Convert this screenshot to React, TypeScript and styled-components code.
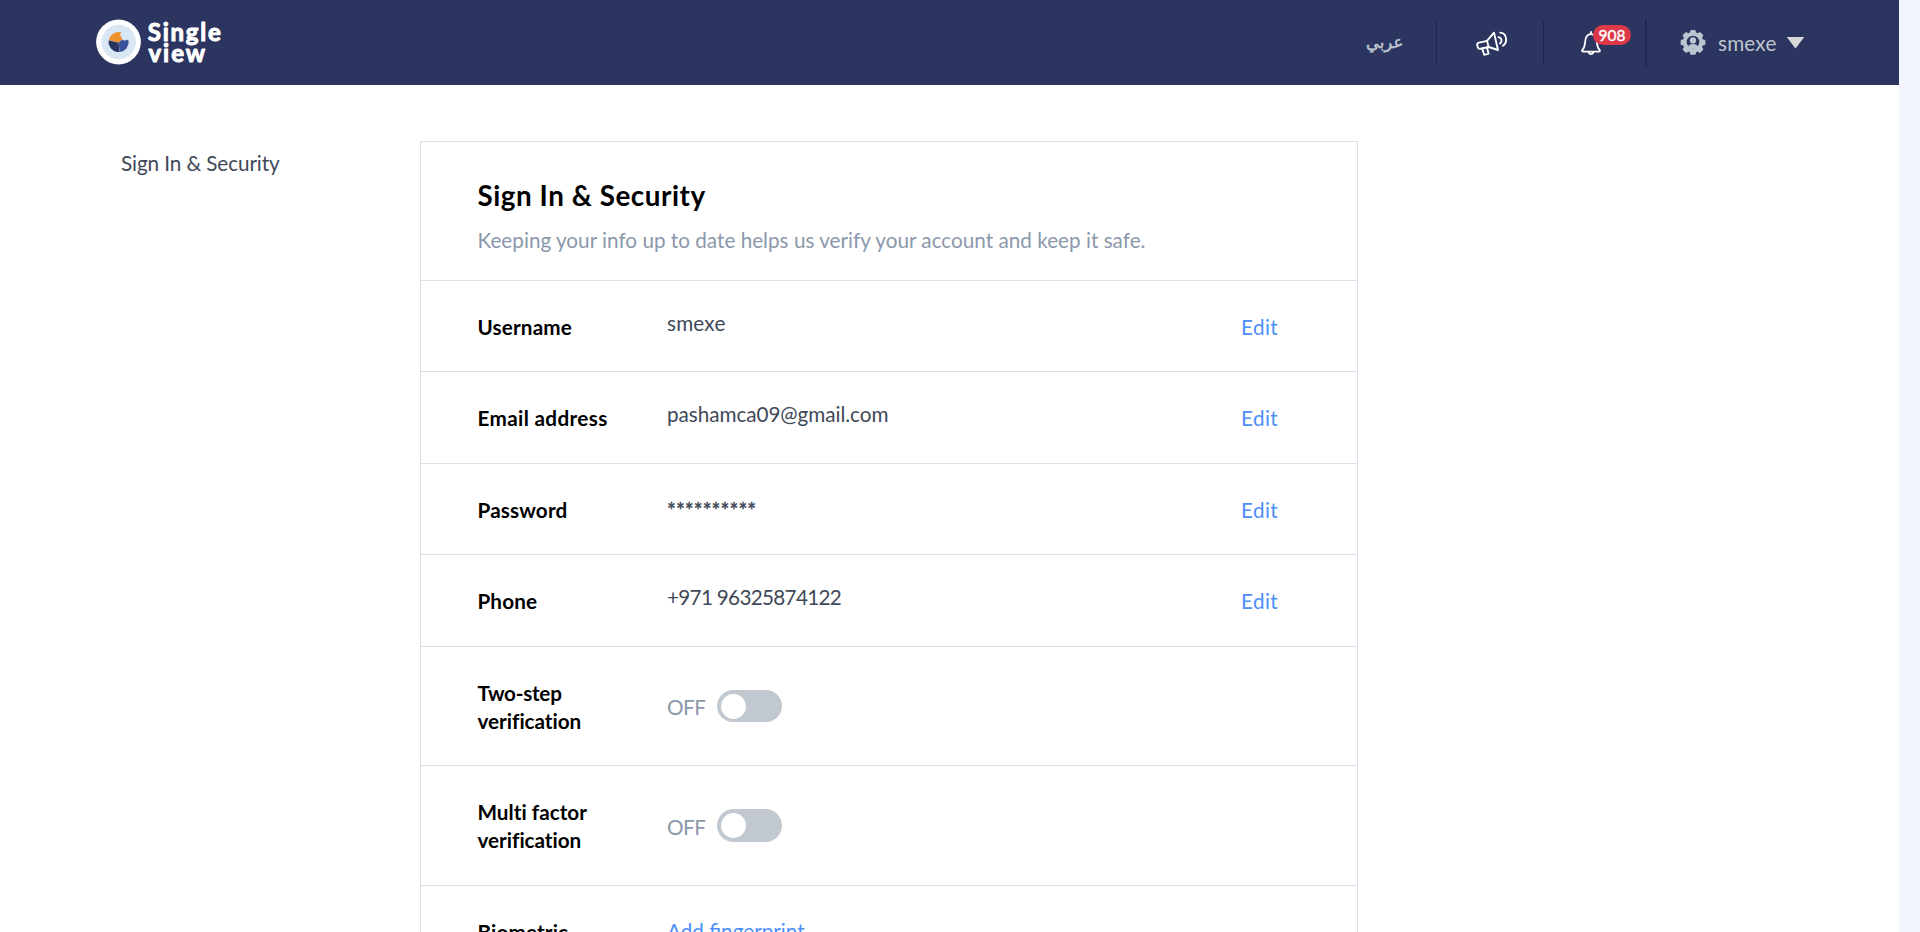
import React from "react";
import styled, { createGlobalStyle } from "styled-components";

const GlobalStyle = createGlobalStyle`
  * { box-sizing: border-box; }
  body {
    margin: 0;
    background: #f2f5fe;
    font-family: Lato, "Liberation Sans", sans-serif;
    font-size: 20.7px;
    line-height: 28px;
    overflow: hidden;
  }
`;

const Page = styled.div`
  width: 1899px;
  height: 932px;
  overflow: hidden;
  background: #fff;
`;

const Header = styled.header`
  display: flex;
  justify-content: space-between;
  height: 85px;
  padding: 0 95px 0 96px;
  background: #2b355f;
`;

const Logo = styled.svg`
  display: block;
  margin-top: 15px;
`;

const Nav = styled.nav`
  display: flex;
  align-items: center;
`;

const NavCell = styled.div<{ $width: number; $line?: number }>`
  display: flex;
  align-items: center;
  width: ${(p) => p.$width}px;
  height: 46px;
  border-right: ${(p) => p.$line ?? 1}px solid #1f2750;
`;

const Language = styled.span`
  margin: 1px 0 0 19px;
  font-family: "DejaVu Sans", sans-serif;
  font-size: 16.5px;
  -webkit-text-stroke: 0.5px #bdc6d0;
  color: #bdc6d0;
`;

const NavIcon = styled.svg<{ $left: number }>`
  display: block;
  flex: none;
  margin-left: ${(p) => p.$left}px;
`;

const BellBox = styled.div`
  position: relative;
  margin: 2px 0 0 37px;
`;

const Badge = styled.span`
  position: absolute;
  left: 12px;
  top: -6px;
  width: 38px;
  height: 20px;
  border-radius: 10px;
  background: #dc3848;
  color: #fff;
  font-size: 15.5px;
  -webkit-text-stroke: 0.4px #fff;
  line-height: 21px;
  text-align: center;
`;

const UserMenu = styled.div`
  display: flex;
  align-items: center;
  width: 157px;
`;

const UserName = styled.span`
  margin: 1px 0 0 12px;
  letter-spacing: 0.2px;
  color: #bdc6d0;
`;

const Main = styled.main`
  display: flex;
  align-items: flex-start;
  padding: 56px 0 0 120px;
`;

const SideNav = styled.aside`
  width: 300px;
  padding: 8px 0 0 1px;
  letter-spacing: -0.09px;
  color: #3f4858;
`;

const Card = styled.section`
  width: 938px;
  border: 1px solid #dae0e9;
  border-bottom: 0;
`;

const CardHead = styled.div`
  height: 139px;
  padding: 37px 0 0 56.5px;
  border-bottom: 1px solid #dae0e9;
`;

const Title = styled.h1`
  margin: 0;
  font-size: 27.8px;
  line-height: 34px;
  letter-spacing: 0.55px;
  color: #000;
`;

const Subtitle = styled.p`
  margin: 13px 0 0;
  letter-spacing: 0.01px;
  color: #8b98ab;
`;

const Row = styled.div<{ $height: number }>`
  display: flex;
  align-items: center;
  height: ${(p) => p.$height}px;
  padding-left: 56px;
  border-bottom: 1px solid #dae0e9;
`;

const Label = styled.div<{ $top?: number }>`
  width: 190px;
  padding: ${(p) => p.$top ?? 0}px 0 0 0.5px;
  font-weight: 700;
  color: #000;
`;

const Line = styled.span<{ $spacing: number }>`
  display: block;
  letter-spacing: ${(p) => p.$spacing}px;
`;

const Value = styled.div<{ $spacing: number; $masked?: boolean }>`
  width: 574px;
  padding-top: ${(p) => (p.$masked ? 9 : 0)}px;
  padding-bottom: 7px;
  -webkit-text-stroke: ${(p) => (p.$masked ? "0.5px #3f4858" : "0")};
  letter-spacing: ${(p) => p.$spacing}px;
  color: #3f4858;
`;

const Link = styled.a<{ $spacing: number; $top?: number; $raise?: number }>`
  padding-top: ${(p) => p.$top ?? 0}px;
  padding-bottom: ${(p) => p.$raise ?? 0}px;
  letter-spacing: ${(p) => p.$spacing}px;
  color: #4d8ef8;
`;

const ToggleState = styled.span`
  width: 50px;
  padding-top: 2px;
  letter-spacing: -0.5px;
  color: #8b98ab;
`;

const Toggle = styled.span<{ $tall?: boolean }>`
  display: flex;
  align-items: center;
  width: 65px;
  height: ${(p) => (p.$tall ? 33 : 32)}px;
  padding-left: 4px;
  border-radius: 17px;
  background: #c2c8d0;
`;

const Knob = styled.span`
  width: 25px;
  height: 25px;
  border-radius: 50%;
  background: #fff;
`;

const details = [
  { label: "Username", labelSpacing: 0.15, value: "smexe", spacing: 0.2, height: 91, top: 2 },
  { label: "Email address", labelSpacing: 0.35, value: "pashamca09@gmail.com", spacing: -0.05, height: 92 },
  { label: "Password", labelSpacing: 0.15, value: "**********", spacing: 0.13, height: 91, top: 2, masked: true },
  { label: "Phone", labelSpacing: 0.1, value: "+971 96325874122", spacing: -0.7, height: 92 },
];

const toggles = [
  { first: "Two-step", spacing: -0.25, height: 119, top: 2 },
  { first: "Multi factor", spacing: 0.02, height: 120, tall: true },
];

const BrandLogo = () => (
  <Logo width="128" height="55" viewBox="96 15 128 55">
    <circle cx="118.5" cy="42" r="22.4" fill="#fff" />
    <circle cx="118.7" cy="42" r="17.3" fill="#d9e6f4" />
    <path d="M118.5 42.8 108.9 40A10 10 0 0 1 118.7 32h2.8a3.2 3.2 0 0 0 .4 5.4l.2 2z" fill="#ee9230" />
    <path d="M118.5 42.8 108.8 40.2A10 10 0 0 0 119.6 52z" fill="#2b3562" />
    <path d="M118.5 42.8 119.8 52A10 10 0 0 0 128.6 40.6c-.8-.9-1.7-.9-2.5-.4-1.4.6-2.6.5-3.8-.6z" fill="#3a539b" />
    <g
      fill="#fff"
      stroke="#fff"
      strokeWidth="1"
      strokeLinejoin="round"
      fontFamily="Lato, sans-serif"
      fontSize="24"
      fontWeight="700"
    >
      <text x="147.8" y="40.6" textLength="73">Single</text>
      <text x="148.5" y="61.6" textLength="56.5">view</text>
    </g>
  </Logo>
);

const Megaphone = () => (
  <NavIcon $left={39} width="32" height="26" viewBox="0 -0.6 32 26" fill="none" stroke="#fff" strokeWidth="1.9" strokeLinejoin="round" strokeLinecap="round">
    <path d="M11 10.2 3 12.1C1.4 12.5.9 13.5 1.3 15l.5 1.7c.4 1.3 1.3 1.8 2.6 1.5l8.2-1.8 9.4 3L18 2z" />
    <path d="m11 10.2 1.6 6.2M6.2 18l2 6.2 4.4-1.1-1.6-6M22.5 6.5c1.8.4 3 1.6 3 3.4 0 1.3-.5 2.3-1.5 3M24.2 2c3.6.4 5.9 3.2 5.9 6.9 0 2.9-1.2 5-3.2 6.2" />
  </NavIcon>
);

const Bell = () => (
  <NavIcon $left={0} width="20" height="25" viewBox="0 0 20 25" fill="none" stroke="#fff" strokeWidth="1.8" strokeLinejoin="round" strokeLinecap="round">
    <path d="M10 1v2M1.3 19.2c2-2.2 2.5-4 2.8-8C4.4 6 6.5 3.2 10 3.2s5.6 2.8 5.9 8c.3 4 .8 5.8 2.8 8 .5.9 0 1.5-.9 1.5H2.2c-.9 0-1.4-.6-.9-1.5z" />
    <path d="M7.8 21.2c.2 1.4 1 2 2.2 2s2-.6 2.2-2" />
  </NavIcon>
);

const UserGear = () => (
  <NavIcon $left={33} width="26" height="26" viewBox="0 0.6 26 26" fill="#bdc6d0">
    {[0, 45, 90, 135].map((angle) => (
      <rect key={angle} x="10.1" y="0.6" width="5.8" height="24.8" rx="1.5" transform={`rotate(${angle} 13 13)`} />
    ))}
    <circle cx="13" cy="13" r="10.3" />
    <circle cx="13" cy="12.6" r="6.3" fill="#2b355f" />
    <circle cx="13" cy="11" r="3.1" />
    <path d="M7.6 18.8c.4-3 2.4-4.2 5.4-4.2s5 1.2 5.4 4.2z" />
  </NavIcon>
);

const Caret = () => (
  <NavIcon $left={9} width="19" height="12" viewBox="0 0.5 19 12">
    <path d="M.3 0h18.4L9.5 12z" fill="#d8d8d8" />
  </NavIcon>
);

export default function App() {
  return (
    <>
      <GlobalStyle />
      <Page>
        <Header>
          <BrandLogo />
          <Nav>
            <NavCell $width={90}>
              <Language lang="ar" dir="rtl">عربي</Language>
            </NavCell>
            <NavCell $width={107}>
              <Megaphone />
            </NavCell>
            <NavCell $width={103} $line={2}>
              <BellBox>
                <Bell />
                <Badge>908</Badge>
              </BellBox>
            </NavCell>
            <UserMenu>
              <UserGear />
              <UserName>smexe</UserName>
              <Caret />
            </UserMenu>
          </Nav>
        </Header>
        <Main>
          <SideNav>Sign In &amp; Security</SideNav>
          <Card>
            <CardHead>
              <Title>Sign In &amp; Security</Title>
              <Subtitle>Keeping your info up to date helps us verify your account and keep it safe.</Subtitle>
            </CardHead>
            {details.map((d) => (
              <Row key={d.label} $height={d.height}>
                <Label $top={d.top}>
                  <Line $spacing={d.labelSpacing}>{d.label}</Line>
                </Label>
                <Value $spacing={d.spacing} $masked={d.masked}>{d.value}</Value>
                <Link $spacing={0.4} $top={d.top}>Edit</Link>
              </Row>
            ))}
            {toggles.map((t) => (
              <Row key={t.first} $height={t.height}>
                <Label $top={t.top}>
                  <Line $spacing={t.spacing}>{t.first}</Line>
                  <Line $spacing={-0.03}>verification</Line>
                </Label>
                <ToggleState>OFF</ToggleState>
                <Toggle $tall={t.tall}>
                  <Knob />
                </Toggle>
              </Row>
            ))}
            <Row $height={92}>
              <Label $top={1}>
                <Line $spacing={0.13}>Biometric</Line>
              </Label>
              <Link $spacing={0} $raise={2}>Add fingerprint</Link>
            </Row>
          </Card>
        </Main>
      </Page>
    </>
  );
}
